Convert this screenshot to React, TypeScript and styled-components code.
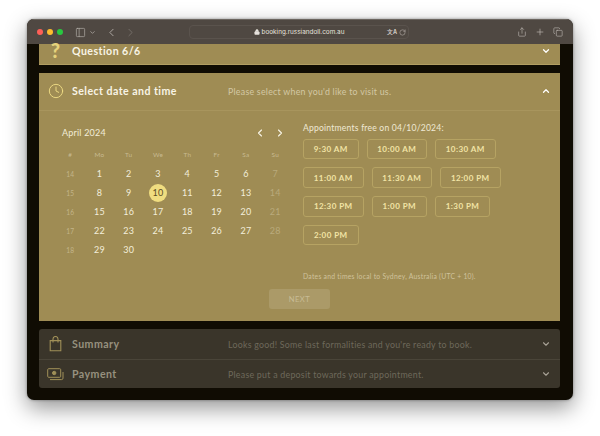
import React from "react";
import styled, { createGlobalStyle } from "styled-components";
import { ChevronDown, ChevronUp, ChevronLeft, ChevronRight, Clock, Lock, Plus, RotateCw, PanelLeft, Share, Copy } from "lucide-react";

const Global = createGlobalStyle`
  html, body { margin: 0; padding: 0; background: #fff; }
  body { width: 600px; height: 436px; overflow: hidden; font-family: Lato, "Open Sans", sans-serif; }
`;
const Page = styled.div`padding: 19px 27px 0;`;
const Win = styled.div`
  width: 546px; height: 381px; border-radius: 7px; overflow: hidden; background: #100c03;
  box-shadow: 0 8px 22px rgba(0,0,0,.42), 0 0 3px rgba(0,0,0,.4);
  display: flex; flex-direction: column;
`;
const Bar = styled.div`
  height: 25px; flex: none; background: #4f4842; display: flex; align-items: center; color: #b9b4ae;
  padding: 0 10px 0 10px; border-top: 1px solid #6b655f; box-sizing: border-box;
`;
const Light = styled.span<{ $c: string }>`
  width: 6px; height: 6px; border-radius: 50%; background: ${p => p.$c}; margin-right: 4px; flex: none;
`;
const Tools = styled.div`display: flex; align-items: center; margin-left: 8px; width: 69px; gap: 3px; flex: none;`;
const Faint = styled.span`display: flex; opacity: .4; margin-left: 3px;`;
const Url = styled.div`
  width: 220px; height: 14px; margin-left: 45px; border: 1px solid #5a534d; border-radius: 4px; box-sizing: border-box;
  display: flex; align-items: center; justify-content: center; gap: 2px; position: relative;
  font-size: 6.4px; color: #e6e2dd; flex: none; font-family: Inter, sans-serif;
`;
const UrlIcons = styled.div`position: absolute; right: 2px; top: 2px; display: flex; align-items: center; gap: 2px; color: #cfcac5;`;
const Translate = styled.span`font-size: 5.5px; font-weight: 700; line-height: 8px;`;
const RightTools = styled.div`margin-left: auto; display: flex; align-items: center; gap: 8px; color: #c3beb8;`;
const Content = styled.div`flex: 1; padding: 0 13px 12px 12px; display: flex; flex-direction: column; gap: 8px; min-height: 0;`;
const Panel = styled.section`background: #9f8c54; flex: none;`;
const QRow = styled.div`
  height: 21px; padding: 0 9px 7px 0; box-sizing: border-box; display: flex; align-items: center;
  border-bottom: 1px solid #b29e62; color: #fff;
`;
const Row = styled.div<{ $muted?: boolean }>`
  height: 36.5px; display: flex; align-items: center; padding-right: 9px; box-sizing: border-box;
  color: ${p => p.$muted ? "#a8a296" : "#fff"};
`;
const IconBox = styled.span<{ $c?: string }>`
  width: 33px; display: flex; justify-content: center; flex: none; color: ${p => p.$c || "#f0dd85"};
`;
const QMark = styled.span`font-size: 20px; font-weight: 900; color: #e6d27c; line-height: 12px; margin-top: -2px;`;
const Title = styled.h2<{ $muted?: boolean }>`
  margin: 0; width: 156px; flex: none; font-size: 10.6px; font-weight: 700; letter-spacing: .45px;
  color: ${p => p.$muted ? "#97917f" : "#f8f4e6"};
`;
const Hint = styled.p<{ $muted?: boolean }>`
  margin: 0; flex: 1; font-size: 8.8px; letter-spacing: .26px; color: ${p => p.$muted ? "#6e695b" : "#d3c8a4"};
`;
const Body = styled.div`border-top: 1px solid #a8955d; padding: 11px 0 12px 16.5px;`;
const Columns = styled.div`display: grid; grid-template-columns: 234.5px 1fr; column-gap: 13px;`;
const Calendar = styled.div`padding-top: 5px;`;
const MonthRow = styled.div`
  height: 12px; display: flex; align-items: center; justify-content: space-between; padding: 0 0 0 6.5px; color: #f8f4e6;
`;
const Month = styled.span`font-size: 9px; color: #f2ecd8; letter-spacing: .2px;`;
const Arrows = styled.span`display: flex; gap: 8px; margin-right: 4px;`;
const Grid = styled.div`
  display: grid; grid-template-columns: repeat(8, 29.3px); grid-template-rows: 20px; grid-auto-rows: 18.9px;
  margin-top: 6px; align-items: center; justify-items: center;
`;
const Head = styled.span`font-size: 6.4px; color: #c8bb92; letter-spacing: .3px;`;
const Week = styled.span`font-size: 6.6px; color: #c3b58a;`;
const Day = styled.span<{ $dim?: boolean; $sel?: boolean }>`
  width: 18px; height: 18px; border-radius: 50%; display: flex; align-items: center; justify-content: center;
  font-size: 9px; letter-spacing: .2px;
  color: ${p => p.$sel ? "#5c4e24" : p.$dim ? "#b9aa7c" : "#f3eedb"};
  background: ${p => p.$sel ? "#f0dd80" : "transparent"};
`;
const Right = styled.div`display: flex; flex-direction: column;`;
const SlotsTitle = styled.div`font-size: 8.6px; line-height: 12px; color: #efe9d4; letter-spacing: .2px;`;
const Slots = styled.div`display: flex; flex-wrap: wrap; gap: 8.3px 8px; width: 240px; margin-top: 5px;`;
const Slot = styled.button<{ $w: number }>`
  width: ${p => p.$w}px; height: 20.5px; box-sizing: border-box; border: 1px solid #b6a363; border-radius: 3px; background: transparent;
  color: #f2e4a6; font: 700 8px Lato, sans-serif; letter-spacing: .45px; padding: 0;
`;
const Note = styled.div`font-size: 6.8px; line-height: 12px; color: #cfc29c; letter-spacing: .25px; margin-top: 25px;`;
const Footer = styled.div`display: flex; justify-content: center; margin-top: 7px; padding-right: 16.5px;`;
const Next = styled.button`
  width: 61px; height: 20px; border: 0; border-radius: 3px; background: #ab9a68; color: #c8bc96;
  font: 400 7.6px Lato, sans-serif; letter-spacing: .5px;
`;
const DarkPanel = styled.section`background: #3a352a; border-radius: 3px; flex: none;`;
const DarkRow = styled(Row)`height: 29.5px; & + & { border-top: 1px solid #4a4539; }`;

const weeks: [number, (number | null)[]][] = [
  [14, [1,2,3,4,5,6,7]], [15, [8,9,10,11,12,13,14]], [16, [15,16,17,18,19,20,21]],
  [17, [22,23,24,25,26,27,28]], [18, [29,30,null,null,null,null,null]],
];
const slots: [string, number][] = [
  ["9:30 AM",55.5],["10:00 AM",60.5],["10:30 AM",60.5],["11:00 AM",60.5],["11:30 AM",60.5],["12:00 PM",60.5],
  ["12:30 PM",60.5],["1:00 PM",55.5],["1:30 PM",55],["2:00 PM",55.5],
];

const Bag = () => (
  <svg width="13" height="16" viewBox="0 0 13 16" fill="none" stroke="currentColor" strokeWidth="1.1">
    <path d="M1.2 4.6h10.6v10.2H1.2z" />
    <path d="M4 6.6V3a2.5 2.5 0 0 1 5 0v3.6" />
  </svg>
);
const Money = () => (
  <svg width="17" height="13" viewBox="0 0 17 13" fill="none" stroke="currentColor" strokeWidth="1">
    <rect x="0.7" y="0.7" width="13" height="8.6" rx="1" />
    <circle cx="7.2" cy="5" r="1.7" fill="currentColor" />
    <path d="M3 11.6h11.5a1.5 1.5 0 0 0 1.5-1.5V4" />
  </svg>
);

export default function App() {
  return (
    <Page>
      <Global />
      <Win>
        <Bar>
          <Light $c="#ff5f57" /><Light $c="#febc2e" /><Light $c="#28c840" />
          <Tools>
            <PanelLeft size={11} strokeWidth={1.4} />
            <ChevronDown size={7} strokeWidth={2.4} />
            <ChevronLeft size={13} strokeWidth={1.6} style={{ marginLeft: 6 }} />
            <Faint><ChevronRight size={13} strokeWidth={1.6} /></Faint>
          </Tools>
          <Url>
            <Lock size={6} fill="currentColor" strokeWidth={2} />
            booking.russiandoll.com.au
            <UrlIcons><Translate>文A</Translate><RotateCw size={7} strokeWidth={1.6} /></UrlIcons>
          </Url>
          <RightTools>
            <Share size={10} strokeWidth={1.4} />
            <Plus size={10} strokeWidth={1.5} />
            <Copy size={10} strokeWidth={1.4} />
          </RightTools>
        </Bar>
        <Content>
          <Panel>
            <QRow>
              <IconBox><QMark>?</QMark></IconBox>
              <Title>Question 6/6</Title>
              <Hint />
              <ChevronDown size={10} strokeWidth={3} />
            </QRow>
          </Panel>
          <Panel>
            <Row>
              <IconBox><Clock size={16} strokeWidth={1.4} /></IconBox>
              <Title>Select date and time</Title>
              <Hint>Please select when you'd like to visit us.</Hint>
              <ChevronUp size={10} strokeWidth={3} />
            </Row>
            <Body>
              <Columns>
                <Calendar>
                  <MonthRow>
                    <Month>April 2024</Month>
                    <Arrows><ChevronLeft size={12} strokeWidth={2.2} /><ChevronRight size={12} strokeWidth={2.2} /></Arrows>
                  </MonthRow>
                  <Grid>
                    {["#","Mo","Tu","We","Th","Fr","Sa","Su"].map(h => <Head key={h}>{h}</Head>)}
                    {weeks.map(([w, days]) => (
                      <React.Fragment key={w}>
                        <Week>{w}</Week>
                        {days.map((d, i) => d === null ? <span key={i} /> : (
                          <Day key={i} $dim={i === 6} $sel={d === 10}>{d}</Day>
                        ))}
                      </React.Fragment>
                    ))}
                  </Grid>
                </Calendar>
                <Right>
                  <SlotsTitle>Appointments free on 04/10/2024:</SlotsTitle>
                  <Slots>{slots.map(([s, w]) => <Slot key={s} $w={w}>{s}</Slot>)}</Slots>
                  <Note>Dates and times local to Sydney, Australia (UTC + 10).</Note>
                </Right>
              </Columns>
              <Footer><Next>NEXT</Next></Footer>
            </Body>
          </Panel>
          <DarkPanel>
            <DarkRow $muted>
              <IconBox $c="#a09058"><Bag /></IconBox>
              <Title $muted>Summary</Title>
              <Hint $muted>Looks good! Some last formalities and you're ready to book.</Hint>
              <ChevronDown size={10} strokeWidth={2.6} />
            </DarkRow>
            <DarkRow $muted>
              <IconBox $c="#a09058"><Money /></IconBox>
              <Title $muted>Payment</Title>
              <Hint $muted>Please put a deposit towards your appointment.</Hint>
              <ChevronDown size={10} strokeWidth={2.6} />
            </DarkRow>
          </DarkPanel>
        </Content>
      </Win>
    </Page>
  );
}
